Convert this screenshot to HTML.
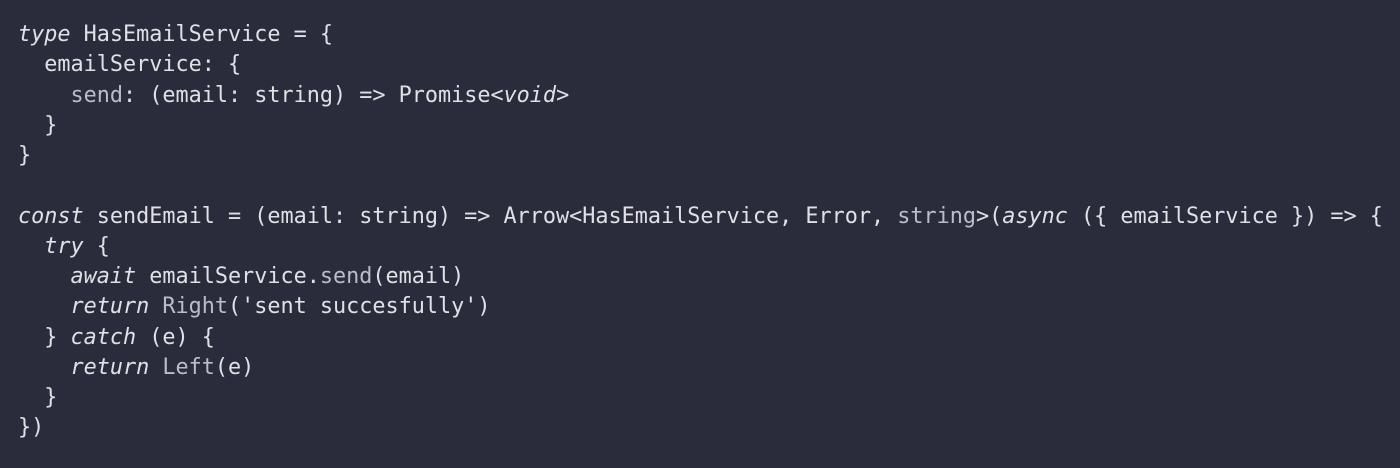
<!DOCTYPE html>
<html><head><style>
html,body{margin:0;padding:0;background:#2a2c3b;width:1400px;height:468px;overflow:hidden}
pre{margin:0;padding:20px 0 0 18px;font-family:"DejaVu Sans Mono","Liberation Mono",monospace;font-size:21.8px;line-height:30.25px;color:#dfe1e6}
i{font-style:italic}
.m{color:#b9bdc9}
</style></head><body><pre><i>type</i> HasEmailService = {
  emailService: {
    <span class="m">send</span>: (email: string) =&gt; Promise&lt;<i>void</i>&gt;
  }
}

<i>const</i> sendEmail = (email: string) =&gt; Arrow&lt;HasEmailService, Error, <span class="m">string</span>&gt;(<i>async</i> ({ emailService }) =&gt; {
  <i>try</i> {
    <i>await</i> emailService.<span class="m">send</span>(email)
    <i>return</i> <span class="m">Right</span>('sent succesfully')
  } <i>catch</i> (e) {
    <i>return</i> <span class="m">Left</span>(e)
  }
})</pre></body></html>
